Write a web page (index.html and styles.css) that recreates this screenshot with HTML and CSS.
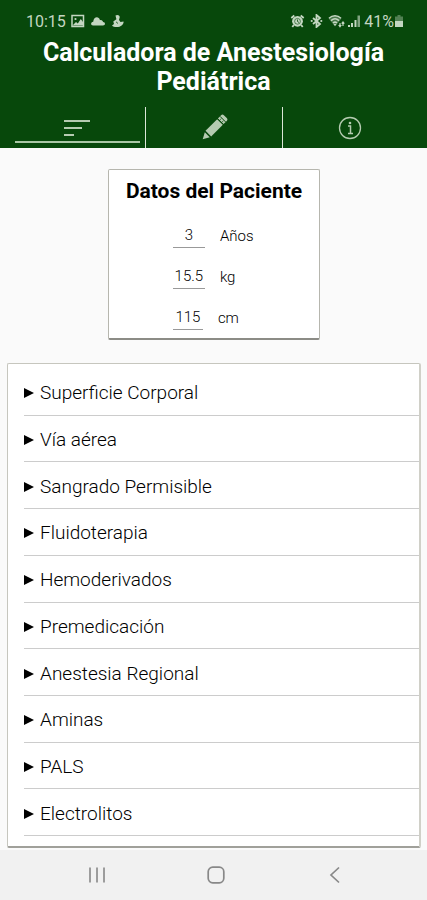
FILE: index.html
```html
<!DOCTYPE html>
<html lang="es">
<head>
<meta charset="utf-8">
<meta name="viewport" content="width=device-width, initial-scale=1">
<title>Calculadora de Anestesiología Pediátrica</title>
<link rel="stylesheet" href="styles.css">
</head>
<body>
<header class="header">
  <div class="status">
    <span class="clock">10:15</span>
    <svg class="icon-picture" width="14" height="14" viewBox="0 0 14 14" aria-hidden="true"><rect x="1" y="1.5" width="11.5" height="11" fill="none" stroke="currentColor" stroke-width="1.5"/><circle cx="4.5" cy="5" r="1.1" fill="currentColor"/><path d="M2 11l3-3 1.800 1.500 3-4.500 2.200 3v3.500H2z" fill="currentColor"/></svg>
    <svg class="icon-cloud" width="14" height="14" viewBox="0 0 14 14" aria-hidden="true"><path d="M2 11.500C-.5 11.500-.5 8 2.200 7.700 2.800 2.500 7.800 1.800 9 6.200c1.700-.5 2.900.7 3 1.900 2.700 0 2.500 3.400 0 3.400z" fill="currentColor"/></svg>
    <svg class="icon-person" width="14" height="14" viewBox="0 0 14 14" aria-hidden="true"><path d="M4.500 1.500c1.500-1.200 4.300-.6 4.200 1.700L8 6l1.500 2L12.500 7.500c.5 1.800-1.500 4.500-4 5.200-3 .7-6.300.3-7.500-1.300l2-1.400L2.300 7.500 5.400 5.300z" fill="currentColor"/><path d="M5 7.800l2 1.700" stroke="#07480b" stroke-width=".8"/></svg>
    <span class="spacer"></span>
    <svg width="15" height="14" viewBox="0 0 15 14" aria-hidden="true"><circle cx="7.500" cy="7.300" r="5.400" fill="currentColor"/><circle cx="7.500" cy="7.300" r="2.900" fill="none" stroke="#07480b" stroke-width=".6"/><path d="M7.500 5.500v2l1.500 1" fill="none" stroke="#07480b" stroke-width=".8"/><path d="M1.300 4l3-2.500M10.700 1.500l3 2.500M3.800 11l-1.500 2M11.200 11l1.500 2" stroke="currentColor" stroke-width="1.800"/></svg>
    <svg class="icon-bluetooth" width="13" height="14" viewBox="0 0 13 14" aria-hidden="true"><path d="M3 4l7 6-3.500 3V1L10 4l-7 6" fill="none" stroke="currentColor" stroke-width="1.800"/><circle cx="1.700" cy="7" r="1.100" fill="currentColor"/><circle cx="11.300" cy="7" r="1.100" fill="currentColor"/></svg>
    <svg class="icon-wifi" width="19" height="14" viewBox="0 0 19 14" aria-hidden="true"><path d="M.5 4.500Q7 -1 13.500 4.500L7 12.500z" fill="currentColor" opacity=".35"/><path d="M1 4.200C4.500.8 9.500.8 13 4.200M3 6.600c2.700-2.500 5.500-2.500 8 0M5 9c1.400-1.200 2.700-1.200 4 0" fill="none" stroke="currentColor" stroke-width="1.500"/><path d="M5.500 10h3L7 12z" fill="currentColor"/><path d="M12 9v4M15 8v4M10.700 11l1.300 1.700 1.300-1.700M13.700 9.700L15 8l1.300 1.700" fill="none" stroke="currentColor" stroke-width="1.200"/></svg>
    <svg width="14" height="14" viewBox="0 0 14 14" aria-hidden="true"><path d="M1 11h2v2H1zM4 9h2v4H4zM7.500 6h2v7h-2z" fill="currentColor"/><path d="M10.500 1.500H13V13h-2.500z" fill="currentColor" opacity=".65"/></svg>
    <span class="battery-label">41%</span>
    <svg width="10" height="14" viewBox="0 0 10 14" aria-hidden="true"><path d="M3.500 1h3v1.500H9V7H1V2.500h2.500z" fill="currentColor" opacity=".4"/><path d="M1 7h8v6H1z" fill="currentColor"/></svg>
  </div>
  <h1 class="title">Calculadora de Anestesiología Pediátrica</h1>
  <nav class="tabs">
    <button class="tab tab-active" type="button" aria-label="Lista"><svg width="28" height="20" viewBox="0 0 28 20"><path d="M1 3h26M1 10h18M1 17h10" stroke="currentColor" stroke-width="2"/></svg></button>
    <button class="tab" type="button" aria-label="Editar"><svg width="28" height="28" viewBox="0 0 28 28"><g transform="rotate(45 14 14)"><path d="M10.500 24.500h7L14 31z" fill="currentColor" transform="translate(0 -1)"/><path d="M10 5.500h8v16.500h-8z" fill="currentColor"/><path d="M10 4.500V0q0-2 2-2h4q2 0 2 2v4.500z" fill="currentColor"/><path d="M10 1.500h8M10 5h8" stroke="#07480b" stroke-width=".9"/><path d="M12.500 2v3M15.500 2v3" stroke="#07480b" stroke-width=".6"/></g></svg></button>
    <button class="tab" type="button" aria-label="Información"><svg width="24" height="24" viewBox="0 0 24 24"><circle cx="12" cy="12" r="10.500" fill="none" stroke="currentColor" stroke-width="1.300"/><circle cx="12" cy="7" r="1.300" fill="currentColor"/><path d="M10 10h2.500v7M10 17.500h5" fill="none" stroke="currentColor" stroke-width="1.500"/></svg></button>
  </nav>
</header>
<main class="main">
  <section class="patient">
    <h2 class="patient-title">Datos del Paciente</h2>
    <div class="field"><input class="value" id="age" value="3" inputmode="decimal"><label for="age">Años</label></div>
    <div class="field"><input class="value" id="weight" value="15.5" inputmode="decimal"><label for="weight">kg</label></div>
    <div class="field"><input class="value value-narrow" id="height" value="115" inputmode="decimal"><label for="height">cm</label></div>
  </section>
  <section class="list">
    <button class="item" type="button"><span class="arrow"></span>Superficie Corporal</button>
    <button class="item" type="button"><span class="arrow"></span>Vía aérea</button>
    <button class="item" type="button"><span class="arrow"></span>Sangrado Permisible</button>
    <button class="item" type="button"><span class="arrow"></span>Fluidoterapia</button>
    <button class="item" type="button"><span class="arrow"></span>Hemoderivados</button>
    <button class="item" type="button"><span class="arrow"></span>Premedicación</button>
    <button class="item" type="button"><span class="arrow"></span>Anestesia Regional</button>
    <button class="item" type="button"><span class="arrow"></span>Aminas</button>
    <button class="item" type="button"><span class="arrow"></span>PALS</button>
    <button class="item" type="button"><span class="arrow"></span>Electrolitos</button>
  </section>
</main>
<footer class="navbar">
  <button class="nav-button" type="button" aria-label="Recientes"><svg width="18" height="18" viewBox="0 0 18 18"><path d="M2 1.500v15M9 1.500v15M16 1.500v15" stroke="currentColor" stroke-width="1.600"/></svg></button>
  <button class="nav-button" type="button" aria-label="Inicio"><svg width="18" height="18" viewBox="0 0 18 18"><rect x="1.200" y="1.200" width="15.600" height="15.600" rx="4.500" fill="none" stroke="currentColor" stroke-width="1.700"/></svg></button>
  <button class="nav-button" type="button" aria-label="Atrás"><svg width="18" height="18" viewBox="0 0 18 18"><path d="M13 1.500L5 9l8 7.500" fill="none" stroke="currentColor" stroke-width="1.700"/></svg></button>
</footer>
</body>
</html>
```
FILE: styles.css
```css
* {
  box-sizing: border-box;
}

body {
  margin: 0;
  min-height: 100vh;
  display: flex;
  flex-direction: column;
  background: #fafafa;
  color: #222;
  font-family: Roboto, "Liberation Sans", sans-serif;
}

button {
  margin: 0;
  padding: 0;
  border: 0;
  background: none;
  color: inherit;
  font: inherit;
}

svg {
  display: block;
  flex: none;
}

.header {
  background: #07480b;
  color: #fff;
}

.status {
  display: flex;
  align-items: center;
  height: 38px;
  padding: 4px 23px 0 26px;
  color: #c3d6c1;
  font-size: 16px;
}

.icon-picture {
  margin-left: 5px;
}

.icon-cloud,
.icon-person {
  margin-left: 6px;
}

.spacer {
  flex: 1;
}

.icon-bluetooth,
.icon-wifi {
  margin-left: 5px;
}

.battery-label {
  margin-left: 3px;
}

.title {
  margin: 0;
  padding: 0 40px;
  font-size: 25px;
  line-height: 29px;
  font-weight: 700;
  text-align: center;
}

.tabs {
  display: grid;
  grid-template-columns: 1fr 1fr 1fr;
  height: 41px;
  margin-top: 11px;
  padding: 0 9px;
  color: #b5cbb1;
}

.tab {
  position: relative;
  display: flex;
  align-items: center;
  justify-content: center;
}

.tab + .tab {
  border-left: 1px solid #dce6d8;
}

.tab-active::after {
  content: "";
  position: absolute;
  left: 6px;
  right: 5px;
  bottom: 5px;
  height: 2px;
  background: #a9c7a5;
}

.main {
  flex: 1;
  display: flex;
  flex-direction: column;
  padding: 21px 6px 2px 7px;
}

.patient {
  align-self: center;
  padding: 7px 17px 0;
  background: #fff;
  border: 1px solid #b6b6ae;
  border-bottom: 2px solid #8c8c86;
  border-radius: 2px;
}

.patient-title {
  margin: 0 0 10px;
  color: #000;
  font-size: 21px;
  line-height: 28px;
  font-weight: 700;
}

.field {
  display: flex;
  align-items: center;
  gap: 15px;
  height: 41px;
  padding-left: 47px;
  color: #000;
  font-size: 15px;
  font-weight: 300;
}

.value {
  width: 32px;
  height: 25px;
  padding: 0;
  border: 0;
  border-bottom: 1px solid #999;
  border-radius: 0;
  background: none;
  color: inherit;
  font: inherit;
  text-align: center;
}

.value-narrow {
  width: 30px;
}

.list {
  flex: 1;
  display: flex;
  flex-direction: column;
  margin-top: 23px;
  padding: 5px 0 10px 16px;
  background: #fff;
  border: 1px solid #c6c6be;
  border-right: 2px solid #d0d0c8;
  border-bottom: 2px solid #a0a09a;
  border-radius: 2px;
}

.item {
  flex: 1;
  display: flex;
  align-items: center;
  gap: 6px;
  padding-top: 3px;
  border-bottom: 1px solid #ccc;
  color: #000;
  font-size: 19px;
  font-weight: 300;
  line-height: 24px;
  text-align: left;
}

.arrow {
  border-left: 10px solid #000;
  border-top: 5px solid transparent;
  border-bottom: 5px solid transparent;
}

.navbar {
  display: flex;
  height: 50px;
  padding: 0 32px 0 37px;
  background: #f1f1f1;
  color: #888;
}

.nav-button {
  flex: 1;
  display: flex;
  align-items: center;
  justify-content: center;
}
```
